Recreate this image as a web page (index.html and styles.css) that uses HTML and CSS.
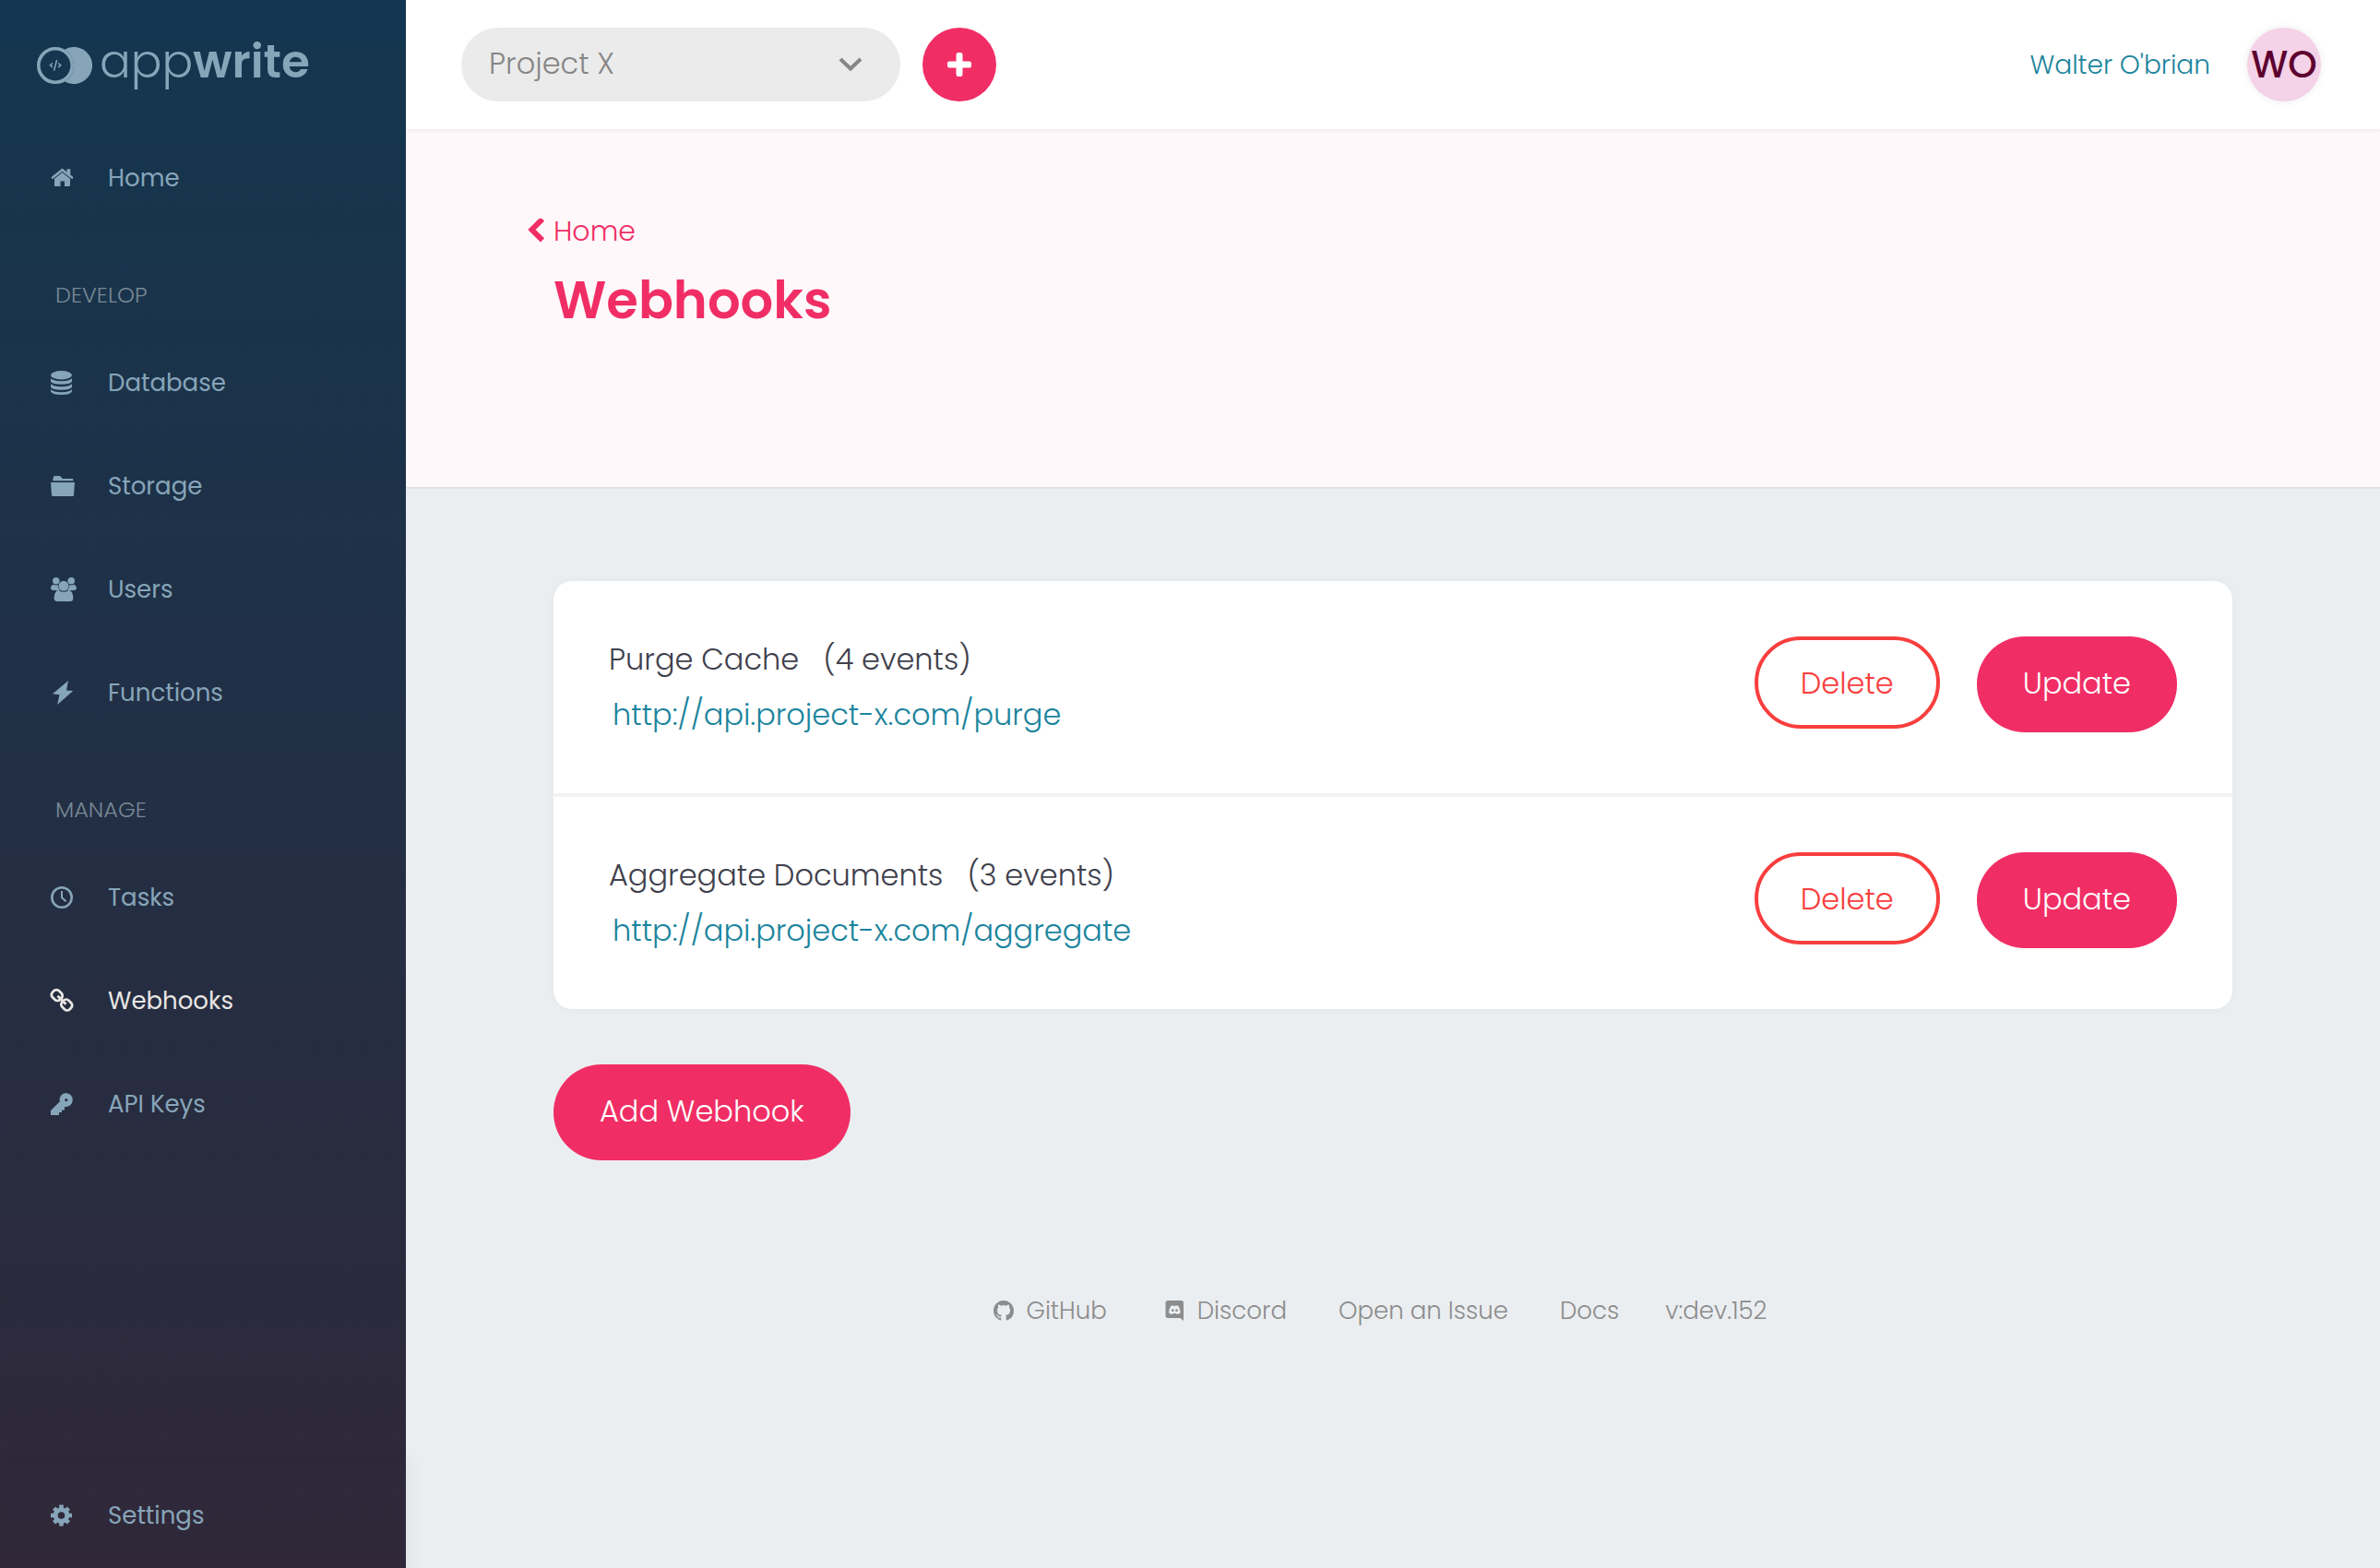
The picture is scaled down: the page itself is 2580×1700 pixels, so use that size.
FILE: index.html
```html
<!DOCTYPE html>
<html lang="en">
<head>
<meta charset="utf-8">
<meta name="viewport" content="width=device-width, initial-scale=1">
<title>Webhooks - Appwrite</title>
<link rel="stylesheet" href="styles.css">
</head>
<body>
<aside class="sidebar">
  <a class="logo" href="#" aria-label="appwrite">
    <svg class="logo-mark" viewBox="0 0 60 40" aria-hidden="true">
      <path fill="currentColor" d="M30 2.7A20 20 0 1 1 30 37.3A20 20 0 0 0 30 2.7Z"/>
      <circle cx="20" cy="20" r="18.2" fill="none" stroke="currentColor" stroke-width="3.6"/>
      <path d="M17 17.5l-2.6 2.2 2.6 2.2M23.2 17.5l2.6 2.2-2.6 2.2M21.6 14l-3 11.5" fill="none" stroke="currentColor" stroke-width="1.5"/>
    </svg>
    <span class="logo-text">app<b>write</b></span>
  </a>
  <nav class="nav">
    <a href="#"><svg viewBox="0 0 30 28"><path d="M3 13.6L13.5 5.2L24 13.6" fill="none" stroke="currentColor" stroke-width="2.6" stroke-linecap="round"/><path d="M18.5 4.2h3.8v7l-3.8-3z"/><path d="M5 14.8L13.5 8l8.500 6.800V22q0 1-1 1h-5v-5.500h-4.500V23H6q-1 0-1-1z"/></svg>Home</a>
    <h2>DEVELOP</h2>
    <a href="#"><svg viewBox="0 0 30 28"><ellipse cx="12.500" cy="5.700" rx="11.500" ry="4.700"/><path d="M1 9.300q3 3 11.500 3t11.500-3v3.400q-2 3-11.500 3t-11.500-3zM1 15.300q3 3 11.500 3t11.500-3v3.400q-2 3-11.500 3t-11.500-3zM1 21.300q3 3 11.500 3t11.500-3v2.200q-2 3.500-11.500 3.500t-11.500-3.500z"/></svg>Database</a>
    <a href="#"><svg viewBox="0 0 30 28"><path d="M3.200 8.200l.6-3.600Q4 3 5.500 3h4.700q1.500 0 2.300 1.500.8 1.500 2 1.500H25l.6 2.200zM1 10h26l-1 13.700q-.1 1.300-1.400 1.300H3.400Q2.200 25 2 23.700z"/></svg>Storage</a>
    <a href="#"><svg viewBox="0 0 30 28"><circle cx="6.800" cy="4.700" r="3.800"/><circle cx="23.200" cy="4.700" r="3.800"/><circle cx="15" cy="10.300" r="5.500"/><path d="M4 8.800q2.500 1.500 4.600.2 0 3.600 2.300 6H4.500Q1 15 1 12.500q.2-3 3-3.700zM26 8.800q-2.500 1.500-4.600.2 0 3.600-2.300 6h6.400q3.500 0 3.500-2.500-.2-3-3-3.700zM9.600 15q5.400 3.700 10.800 0Q24 15 25 20.500q1.500 6.500-2.500 6.500h-15Q3.500 27 5 20.500 6 15 9.600 15z"/></svg>Users</a>
    <a href="#"><svg viewBox="0 0 30 28"><path d="M20 1l-2 10.400 7.200.6L8.200 27l2.200-10.800L3 15.200z"/></svg>Functions</a>
    <h2>MANAGE</h2>
    <a href="#"><svg viewBox="0 0 30 28"><circle cx="13" cy="14" r="10.700" fill="none" stroke="currentColor" stroke-width="2.600"/><path d="M13 7v7.300l4.600 4" fill="none" stroke="currentColor" stroke-width="2"/></svg>Tasks</a>
    <a href="#" class="active" aria-current="page"><svg viewBox="0 0 30 28"><g fill="none" stroke="currentColor" stroke-width="2.800"><rect x="2" y="3" width="11.500" height="10" rx="4" transform="rotate(45 7.750 8)"/><rect x="12.500" y="13.500" width="11.500" height="10" rx="4" transform="rotate(45 18.250 18.500)"/><path d="M8.500 8.800l9 9"/></g></svg>Webhooks</a>
    <a href="#"><svg viewBox="0 0 30 28"><path fill-rule="evenodd" d="M17.500 2a7.500 7.500 0 1 1-.5 15h-1v3.500h-3V23h-3v3H1v-5l9.800-9.800A7.300 7.300 0 0 1 17.500 2zm.3 6a1.600 1.600 0 1 0 0 3.200 1.600 1.600 0 0 0 0-3.200z"/></svg>API Keys</a>
  </nav>
  <div class="nav nav-bottom">
    <a href="#"><svg viewBox="0 0 30 28"><circle cx="12.500" cy="14" r="6.300" fill="none" stroke="currentColor" stroke-width="5"/><path d="M12.500 2.500v5M12.500 20.500v5M1 14h5M19 14h5M4.600 6.100l3 3M17.400 18.900l3 3M20.400 6.100l-3 3M7.600 18.900l-3 3" stroke="currentColor" stroke-width="4.600"/></svg>Settings</a>
  </div>
</aside>
<div class="page">
  <header class="topbar">
    <div class="project">
      <select aria-label="Project"><option>Project X</option></select>
      <svg viewBox="0 0 26 16" aria-hidden="true"><path d="M2 2l11 10.500L24 2" fill="none" stroke="currentColor" stroke-width="4"/></svg>
    </div>
    <button class="add" aria-label="New project"><svg viewBox="0 0 26 26"><path d="M13 3v20M3 13h20" stroke="currentColor" stroke-width="7" stroke-linecap="round"/></svg></button>
    <a class="user" href="#">Walter O'brian</a>
    <span class="avatar">WO</span>
  </header>
  <main>
    <div class="cover">
      <a class="back" href="#"><svg viewBox="0 2 18 28" aria-hidden="true"><path d="M16 2.500L4.500 14L16 25.500" fill="none" stroke="currentColor" stroke-width="6"/></svg>Home</a>
      <h1>Webhooks</h1>
    </div>
    <div class="content">
      <ul class="card">
        <li>
          <div class="hook"><span class="name">Purge Cache</span><span>(4 events)</span><a href="#">http://api.project-x.com/purge</a></div>
          <button class="btn outline">Delete</button>
          <button class="btn">Update</button>
        </li>
        <li>
          <div class="hook"><span class="name">Aggregate Documents</span><span>(3 events)</span><a href="#">http://api.project-x.com/aggregate</a></div>
          <button class="btn outline">Delete</button>
          <button class="btn">Update</button>
        </li>
      </ul>
      <button class="btn wide">Add Webhook</button>
    </div>
  </main>
  <footer class="footer">
    <a href="#"><svg viewBox="0 0 16 16"><path d="M8 0C3.580 0 0 3.580 0 8c0 3.540 2.290 6.530 5.470 7.590.4.070.55-.17.55-.38 0-.19-.01-.82-.01-1.490-2.010.37-2.530-.49-2.690-.94-.09-.23-.48-.94-.82-1.130-.28-.15-.68-.52-.01-.53.63-.01 1.080.58 1.230.82.72 1.210 1.870.87 2.330.66.070-.52.28-.87.51-1.070-1.780-.2-3.640-.89-3.640-3.950 0-.87.31-1.590.82-2.150-.08-.2-.36-1.020.08-2.120 0 0 .67-.21 2.200.82.64-.18 1.320-.27 2-.27s1.360.09 2 .27c1.530-1.040 2.200-.82 2.200-.82.44 1.100.16 1.920.08 2.120.51.56.82 1.270.82 2.150 0 3.070-1.870 3.750-3.650 3.950.29.25.54.73.54 1.480 0 1.070-.01 1.930-.01 2.200 0 .21.15.46.55.38A8.010 8.010 0 0 0 16 8c0-4.420-3.580-8-8-8z"/></svg>GitHub</a>
    <a href="#"><svg viewBox="0 0 22 22"><path fill-rule="evenodd" d="M4 0h14.500Q21 0 21 2.500V22l-3.300-3H4q-2.500 0-2.500-2.500v-14Q1.500 0 4 0zM7 6.200Q5 10 5 13.300 6.500 15 9 15l.7-1h3.300l.7 1q2.500 0 4-1.700 0-3.300-2-7.100-1.500-1-3-1l-.4.700h-1.900L10 5.200q-1.500 0-3 1zM9.300 9.300a1.300 1.400 0 1 1 0 2.800 1.300 1.400 0 1 1 0-2.800zm4.200 0a1.300 1.400 0 1 1 0 2.800 1.300 1.400 0 1 1 0-2.800z"/></svg>Discord</a>
    <a href="#">Open an Issue</a>
    <a href="#">Docs</a>
    <span>v:dev.152</span>
  </footer>
</div>
</body>
</html>
```
FILE: styles.css
```css
* { box-sizing: border-box; }
body {
  margin: 0;
  display: flex;
  min-height: 100vh;
  background: #ebeef1;
  color: #40404c;
  font: 300 32px/50px Poppins, Inter, "Open Sans", sans-serif;
}
a { color: #1b849d; text-decoration: none; }
h1, h2, ul { margin: 0; padding: 0; list-style: none; }
button, select { font: inherit; border: 0; margin: 0; cursor: pointer; }
svg { display: block; flex: none; fill: currentColor; }

/* Sidebar */
.sidebar {
  position: sticky;
  top: 0;
  z-index: 1;
  display: flex;
  flex-direction: column;
  flex: none;
  width: 440px;
  height: 100vh;
  background: linear-gradient(#143650, #302839);
  color: #87a5b9;
}
.logo {
  display: flex;
  align-items: center;
  gap: 8px;
  height: 137px;
  padding: 4px 0 0 40px;
  color: #87a5b9;
}
.logo-mark { width: 60px; height: 40px; }
.logo-text { font-size: 50px; line-height: 60px; font-weight: 300; padding-bottom: 8px; }
.logo-text b { font-weight: 600; }
.nav { font-size: 26px; font-weight: 400; }
.nav a {
  display: flex;
  align-items: center;
  gap: 33px;
  height: 112px;
  padding-left: 54px;
  color: #87a5b9;
}
.nav a.active { color: #e8e6e3; }
.nav svg { width: 30px; height: 28px; }
.nav h2 {
  height: 110px;
  padding-left: 60px;
  font-size: 24px;
  line-height: 142px;
  font-weight: 300;
  color: #788995;
}
.nav-bottom {
  margin-top: auto;
  padding-bottom: 1px;
  box-shadow: 0 0 20px 4px rgba(0, 0, 0, .05);
}

/* Top bar */
.page { flex: 1; min-width: 0; }
.topbar {
  position: relative;
  display: flex;
  align-items: center;
  height: 140px;
  padding: 0 64px 0 60px;
  background: #fff;
  box-shadow: 0 0 4px 2px rgba(0, 0, 0, .05);
}
.project { position: relative; width: 476px; color: #868686; }
.project select {
  display: block;
  width: 100%;
  height: 80px;
  padding: 0 30px 2px;
  border-radius: 40px;
  appearance: none;
  background: #ebebeb;
  color: inherit;
}
.project svg {
  position: absolute;
  right: 41px;
  top: 32px;
  width: 26px;
  height: 16px;
  pointer-events: none;
}
.add {
  display: grid;
  place-items: center;
  width: 80px;
  height: 80px;
  margin-left: 24px;
  padding: 0;
  border-radius: 50%;
  background: #f02e65;
  color: #fff;
}
.add svg { width: 26px; height: 26px; }
.user { margin-left: auto; padding-top: 2px; font-size: 28px; }
.avatar {
  width: 80px;
  height: 80px;
  margin-left: 40px;
  border-radius: 50%;
  background: #f4d2e7;
  box-shadow: 0 0 8px rgba(0, 0, 0, .08);
  color: #5d0030;
  font-size: 40px;
  line-height: 80px;
  font-weight: 500;
  text-align: center;
}

/* Page cover */
.cover {
  height: 390px;
  padding: 86px 160px 0;
  border-bottom: 2px solid #e0e3e4;
  background: #fff8fa;
  color: #f02e65;
}
.back {
  display: flex;
  align-items: center;
  gap: 10px;
  margin-left: -28px;
  color: inherit;
  font-size: 30px;
}
.back svg { width: 18px; height: 28px; }
h1 { font-size: 56px; line-height: 100px; font-weight: 600; }

/* Webhook list */
.content { padding: 100px 160px 0; }
.card {
  border-radius: 20px;
  background: #fff;
  box-shadow: 0 0 8px rgba(0, 0, 0, .04);
}
.card li {
  display: flex;
  align-items: flex-start;
  gap: 40px;
  min-height: 230px;
  padding: 60px;
}
.card li + li { min-height: 234px; border-top: 4px solid #f2f2f2; }
.hook { flex: 1; }
.name { margin-right: 26px; }
.hook a { display: block; padding: 10px 0 0 4px; }
.btn {
  height: 104px;
  padding: 0 50px 2px;
  border-radius: 52px;
  background: #f02e65;
  color: #fff;
}
.btn.outline {
  height: 100px;
  padding: 2px 46px 0;
  border: 4px solid #f93e3e;
  background: none;
  color: #f93e3e;
}
.btn.wide { margin-top: 60px; }

/* Footer */
.footer {
  display: flex;
  justify-content: center;
  gap: 50px;
  padding: 138px 40px 100px 0;
  font-size: 26px;
  color: #8c8c8c;
}
.footer a { display: flex; align-items: center; gap: 14px; padding-left: 6px; color: inherit; }
.footer svg { width: 22px; height: 22px; margin-left: 6px; }
```
